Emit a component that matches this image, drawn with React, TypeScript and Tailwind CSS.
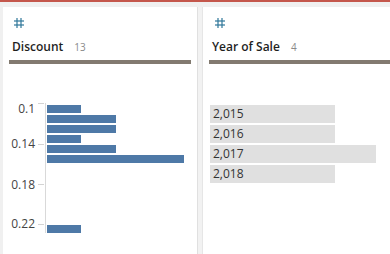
import React from "react";

const font = { fontFamily: "'Open Sans', 'Noto Sans', sans-serif" };

function Hash() {
  return (
    <svg width="10" height="10" viewBox="0 0 10 10" className="block">
      <g stroke="#2f7799" strokeWidth="1.2" fill="none">
        <line x1="3" y1="0" x2="3" y2="10" />
        <line x1="7" y1="0" x2="7" y2="10" />
        <line x1="0" y1="3" x2="10" y2="3" />
        <line x1="0" y1="7" x2="10" y2="7" />
      </g>
    </svg>
  );
}

const bars = [
  { y: 105, w: 34 },
  { y: 115, w: 69 },
  { y: 125, w: 69 },
  { y: 135, w: 34 },
  { y: 145, w: 69 },
  { y: 155, w: 137 },
  { y: 225, w: 34 },
];

const ticks = [103.5, 144.5, 184.5, 224.5];
const labels = [
  { t: "0.1", y: 109 },
  { t: "0.14", y: 144 },
  { t: "0.18", y: 184.5 },
  { t: "0.22", y: 224 },
];

function Chart() {
  // absolute (X,Y) -> svg (X-3, Y-64)
  return (
    <svg width="194" height="190" className="block">
      <line x1="42.5" y1="39" x2="42.5" y2="169" stroke="#d9d9d9" strokeWidth="1" />
      {ticks.map((y) => (
        <line key={y} x1="35" y1={y - 64} x2="41" y2={y - 64} stroke="#d3d3d3" strokeWidth="1" />
      ))}
      {labels.map((l) => (
        <text
          key={l.t}
          x="32"
          y={l.y - 64 + 4.3}
          textAnchor="end"
          fontSize="12"
          fill="#444"
          style={font}
        >
          {l.t}
        </text>
      ))}
      {bars.map((b, i) => (
        <rect key={i} x="44" y={b.y - 64} width={b.w} height="8" fill="#4e79a7" />
      ))}
    </svg>
  );
}

function Header({ title, count, hashLeft, titleLeft }: { title: string; count: string; hashLeft: string; titleLeft: string }) {
  return (
    <>
      <div className={`mt-[11px] ${hashLeft}`}>
        <Hash />
      </div>
      <div className={`mt-[11px] h-[16px] flex items-baseline ${titleLeft}`} style={font}>
        <span className="text-[12px] leading-[16px] font-semibold text-[#1f1f1f]">{title}</span>
        <span className="ml-[11px] text-[10px] leading-[16px] text-[#8a8a8a]">{count}</span>
      </div>
    </>
  );
}

export default function App() {
  const years = [
    { t: "2,015", w: "w-[125px]" },
    { t: "2,016", w: "w-[125px]" },
    { t: "2,017", w: "w-[166px]" },
    { t: "2,018", w: "w-[125px]" },
  ];
  return (
    <div className="w-[390px] h-[254px] bg-[#f0f0f0] overflow-hidden flex flex-col">
      <div className="h-[2px] bg-[#c4574c] shrink-0" />
      <div className="flex flex-1 pt-[5px] pl-[3px]">
        <div className="w-[194px] bg-white flex flex-col">
          <Header title="Discount" count="13" hashLeft="ml-[11px]" titleLeft="ml-[9px]" />
          <div className="mt-[5px] mx-[6px] h-[4px] bg-[#827a70]" />
          <Chart />
        </div>
        <div className="w-[6px] flex">
          <div className="w-[1px] bg-[#e0e0e0]" />
          <div className="flex-1 bg-[#f2f2f2]" />
          <div className="w-[1px] bg-[#e6e6e6]" />
        </div>
        <div className="flex-1 bg-white flex flex-col">
          <Header title="Year of Sale" count="4" hashLeft="ml-[12px]" titleLeft="ml-[9px]" />
          <div className="mt-[5px] ml-[6px] h-[4px] bg-[#827a70]" />
          <div className="mt-[41px] ml-[7px] flex flex-col gap-[2px]" style={font}>
            {years.map((y) => (
              <div key={y.t} className={`${y.w} h-[18px] bg-[#e0e0e0] pl-[3px] text-[12px] leading-[18px] text-[#333]`}>
                {y.t}
              </div>
            ))}
          </div>
        </div>
      </div>
    </div>
  );
}
